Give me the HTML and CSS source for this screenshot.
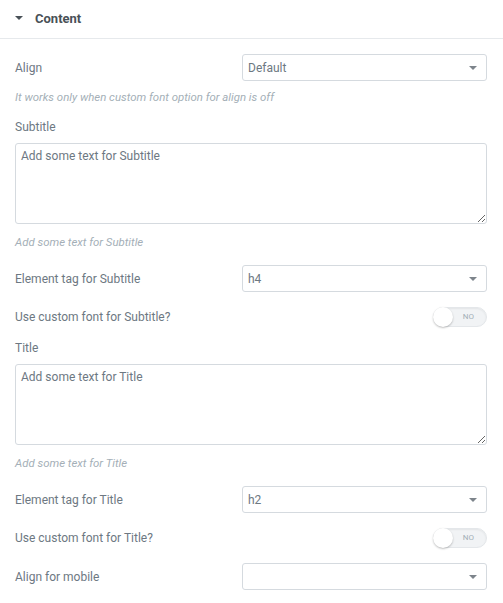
FILE: index.html
```html
<!DOCTYPE html>
<html>
<head>
<meta charset="utf-8">
<link rel="stylesheet" href="styles.css">
</head>
<body>
<div class="panel">
  <div class="section-head">
    <span class="caret"></span>
    <span class="section-title">Content</span>
  </div>
  <div class="controls">
    <div class="control">
      <div class="row">
        <label class="label">Align</label>
        <div class="select"><span class="select-value">Default</span><span class="arrow"></span></div>
      </div>
      <div class="note note-tight">It works only when custom font option for align is off</div>
    </div>

    <div class="control">
      <label class="label block">Subtitle</label>
      <textarea class="textarea">Add some text for Subtitle</textarea>
      <div class="note">Add some text for Subtitle</div>
    </div>

    <div class="control">
      <div class="row">
        <label class="label">Element tag for Subtitle</label>
        <div class="select"><span class="select-value">h4</span><span class="arrow"></span></div>
      </div>
    </div>

    <div class="control control-toggle">
      <div class="row toggle-row">
        <label class="label">Use custom font for Subtitle?</label>
        <div class="toggle"><span class="knob"></span><span class="toggle-text">NO</span></div>
      </div>
    </div>

    <div class="control">
      <label class="label block">Title</label>
      <textarea class="textarea">Add some text for Title</textarea>
      <div class="note">Add some text for Title</div>
    </div>

    <div class="control">
      <div class="row">
        <label class="label">Element tag for Title</label>
        <div class="select"><span class="select-value">h2</span><span class="arrow"></span></div>
      </div>
    </div>

    <div class="control">
      <div class="row toggle-row">
        <label class="label">Use custom font for Title?</label>
        <div class="toggle"><span class="knob"></span><span class="toggle-text">NO</span></div>
      </div>
    </div>

    <div class="control">
      <div class="row">
        <label class="label">Align for mobile</label>
        <div class="select"><span class="select-value"></span><span class="arrow"></span></div>
      </div>
    </div>
  </div>
</div>
</body>
</html>
```

FILE: styles.css
```css
* { box-sizing: border-box; }
html, body { margin: 0; padding: 0; background: #fff; }
body {
  font-family: Roboto, "Liberation Sans", Arial, sans-serif;
  color: #6d7882;
  width: 503px;
  overflow: hidden;
}
.panel { background: #fff; }
.section-head {
  height: 39px;
  border-bottom: 1px solid #e6e9ec;
  display: flex;
  align-items: center;
  padding-left: 15px;
  padding-bottom: 2px;
}
.caret {
  width: 0; height: 0;
  border-left: 4px solid transparent;
  border-right: 4px solid transparent;
  border-top: 4px solid #495157;
  margin-right: 12px;
}
.section-title {
  font-size: 13px;
  font-weight: 700;
  color: #495157;
}
.controls { padding: 15px 16px 0 15px; }
.control { margin-bottom: 15px; }
.control-toggle { margin-bottom: 14px; }
.row {
  display: flex;
  align-items: center;
  justify-content: space-between;
}
.label {
  font-size: 12px;
  line-height: 15px;
  color: #6d7882;
  padding-top: 1px;
}
.label.block { display: block; margin-bottom: 8px; padding-top: 0; }
.select {
  width: 245px;
  height: 27px;
  border: 1px solid #d5dadf;
  border-radius: 3px;
  display: flex;
  align-items: center;
  justify-content: space-between;
  padding: 0 9px 0 5px;
}
.select-value { font-size: 12px; color: #6d7882; }
.arrow {
  width: 0; height: 0;
  border-left: 4px solid transparent;
  border-right: 4px solid transparent;
  border-top: 4px solid #7d848b;
}
.note {
  margin-top: 11px;
  font-size: 11.4px;
  line-height: 15px;
  font-style: italic;
  color: #a4afb7;
}
.note-tight { margin-top: 9px; }
.textarea {
  display: block;
  width: 100%;
  height: 81px;
  border: 1px solid #d5dadf;
  border-radius: 3px;
  padding: 5px;
  font-family: Roboto, "Liberation Sans", Arial, sans-serif;
  font-size: 12px;
  line-height: 15px;
  color: #6d7882;
  resize: vertical;
  margin: 0;
  outline: none;
}
.toggle-row { height: 20px; }
.toggle {
  position: relative;
  width: 54px;
  height: 20px;
  border-radius: 10px;
  background: #f1f3f5;
  border: 1px solid #e4e7ea;
  box-shadow: inset 0 1px 2px rgba(0,0,0,0.06);
}
.knob {
  position: absolute;
  left: -1px; top: -1px;
  width: 20px; height: 20px;
  border-radius: 50%;
  background: #fff;
  box-shadow: 0 1px 2px rgba(0,0,0,0.25);
}
.toggle-text {
  position: absolute;
  right: 12px;
  top: 0;
  line-height: 18px;
  font-size: 8px;
  color: #a4afb7;
}
```
